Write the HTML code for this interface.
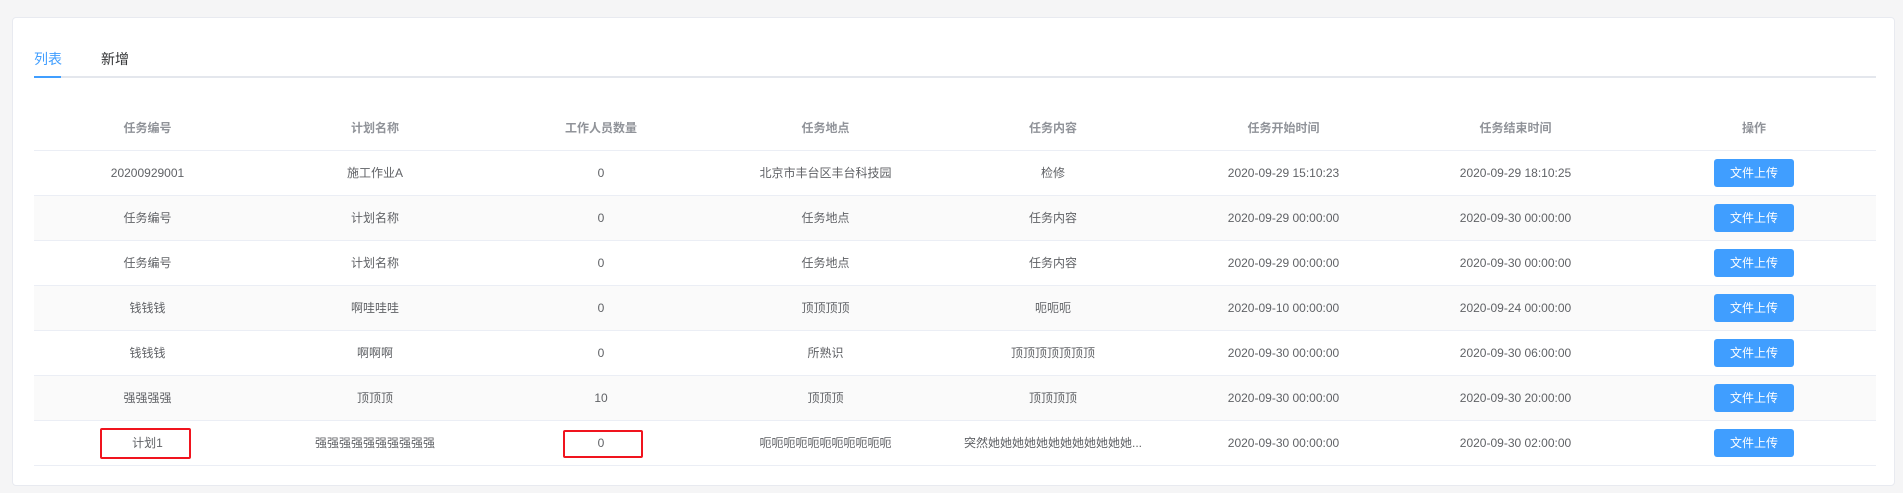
<!DOCTYPE html>
<html><head><meta charset="utf-8"><style>
*{margin:0;padding:0;box-sizing:border-box}
body{width:1903px;height:493px;background:#f5f5f6;font-family:"Liberation Sans","Noto Sans CJK SC",sans-serif;position:relative;overflow:hidden}
.card{position:absolute;left:12px;top:17px;width:1883px;height:469px;background:#fff;border:1px solid #e8eaf0;border-radius:4px}
.tab{position:absolute;top:31px;font-size:14px}
.line{position:absolute;left:21px;top:58px;width:1842px;height:2px;background:#e4e7ed}
.act{position:absolute;left:21px;top:58px;width:27px;height:2px;background:#409eff}
table{position:absolute;left:21px;top:88px;width:1842px;border-collapse:collapse;table-layout:fixed;font-size:12px;color:#606266}
th{height:44px;color:#909399;font-weight:bold;border-bottom:1px solid #ebeef5;text-align:center}
td{height:45px;border-bottom:1px solid #ebeef5;text-align:center;white-space:nowrap;overflow:hidden}
tr.s td{background:#fafafa}
.b{display:inline-block;width:80px;height:28px;line-height:28px;background:#409eff;color:#fff;border-radius:3px;font-size:12px}
.r{position:absolute;border:2px solid #f0141e;border-radius:2px}
</style></head><body>
<div class="card">
<div class="tab" style="left:21px;color:#409eff">列表</div>
<div class="tab" style="left:88px;color:#303133">新增</div>
<div class="line"></div><div class="act"></div>
<table>
<colgroup><col style="width:227px"><col style="width:228px"><col style="width:224px"><col style="width:225px"><col style="width:230px"><col style="width:231px"><col style="width:233px"><col style="width:244px"></colgroup>
<tr><th>任务编号</th><th>计划名称</th><th>工作人员数量</th><th>任务地点</th><th>任务内容</th><th>任务开始时间</th><th>任务结束时间</th><th>操作</th></tr>
<tr><td>20200929001</td><td>施工作业A</td><td>0</td><td>北京市丰台区丰台科技园</td><td>检修</td><td>2020-09-29 15:10:23</td><td>2020-09-29 18:10:25</td><td><span class="b">文件上传</span></td></tr>
<tr class="s"><td>任务编号</td><td>计划名称</td><td>0</td><td>任务地点</td><td>任务内容</td><td>2020-09-29 00:00:00</td><td>2020-09-30 00:00:00</td><td><span class="b">文件上传</span></td></tr>
<tr><td>任务编号</td><td>计划名称</td><td>0</td><td>任务地点</td><td>任务内容</td><td>2020-09-29 00:00:00</td><td>2020-09-30 00:00:00</td><td><span class="b">文件上传</span></td></tr>
<tr class="s"><td>钱钱钱</td><td>啊哇哇哇</td><td>0</td><td>顶顶顶顶</td><td>呃呃呃</td><td>2020-09-10 00:00:00</td><td>2020-09-24 00:00:00</td><td><span class="b">文件上传</span></td></tr>
<tr><td>钱钱钱</td><td>啊啊啊</td><td>0</td><td>所熟识</td><td>顶顶顶顶顶顶顶</td><td>2020-09-30 00:00:00</td><td>2020-09-30 06:00:00</td><td><span class="b">文件上传</span></td></tr>
<tr class="s"><td>强强强强</td><td>顶顶顶</td><td>10</td><td>顶顶顶</td><td>顶顶顶顶</td><td>2020-09-30 00:00:00</td><td>2020-09-30 20:00:00</td><td><span class="b">文件上传</span></td></tr>
<tr><td>计划1</td><td>强强强强强强强强强强</td><td>0</td><td>呃呃呃呃呃呃呃呃呃呃呃</td><td>突然她她她她她她她她她她她她...</td><td>2020-09-30 00:00:00</td><td>2020-09-30 02:00:00</td><td><span class="b">文件上传</span></td></tr>
</table>
</div>
<div class="r" style="left:100px;top:428px;width:91px;height:31px"></div>
<div class="r" style="left:563px;top:430px;width:80px;height:28px"></div>
</body></html>
